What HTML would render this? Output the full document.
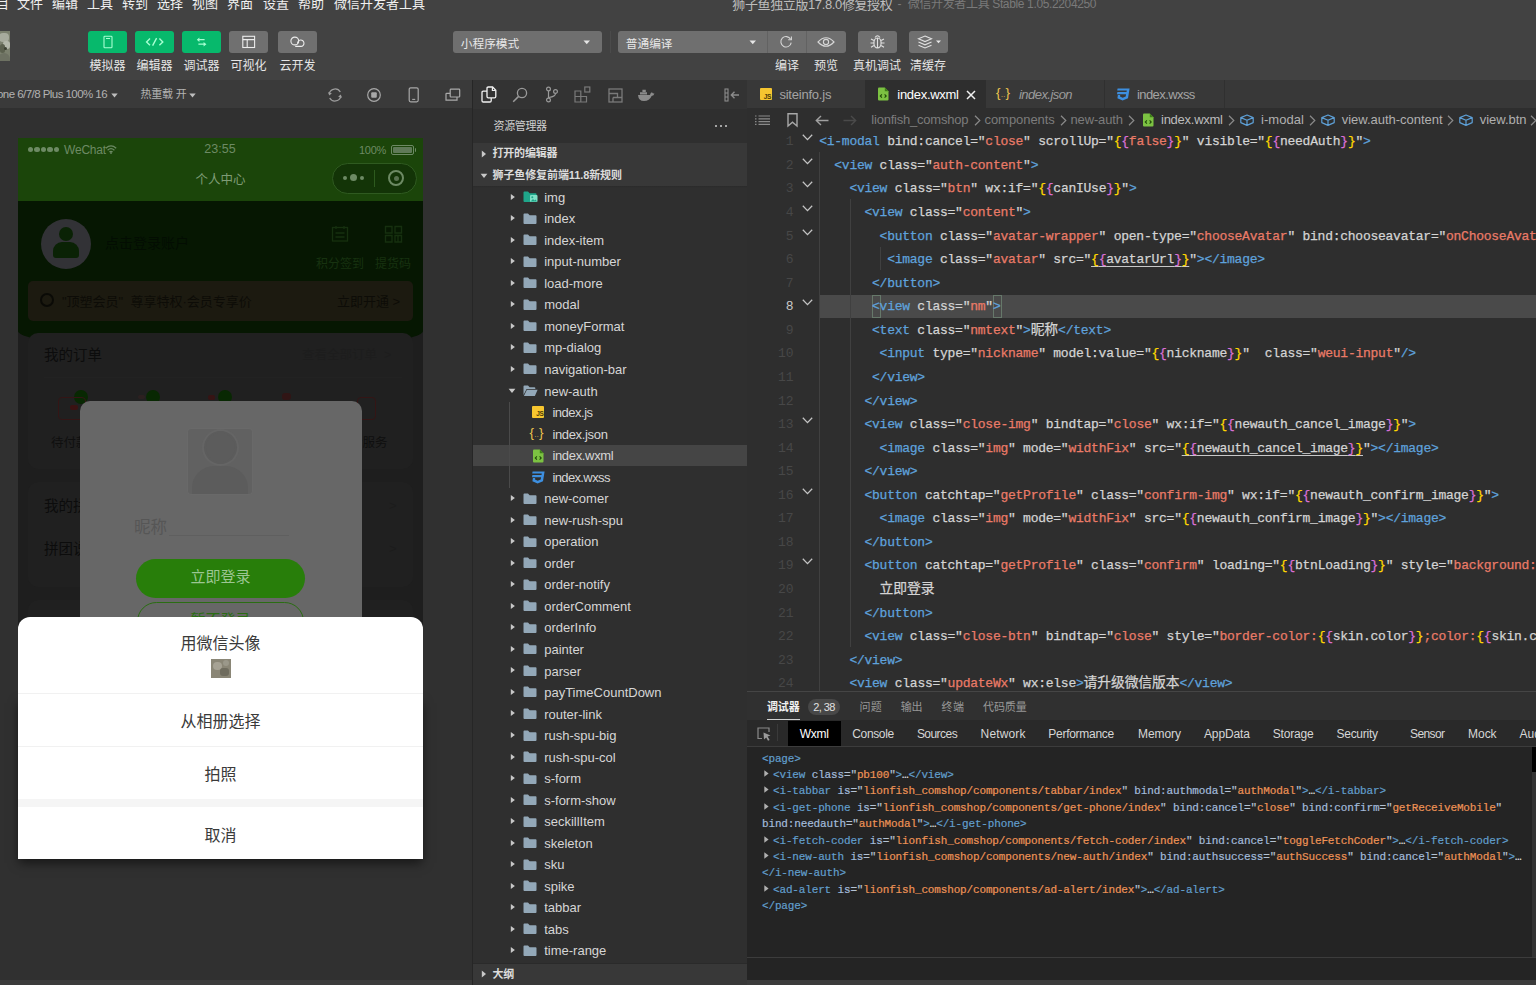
<!DOCTYPE html>
<html lang="zh-CN">
<head>
<meta charset="utf-8">
<title>微信开发者工具</title>
<style>
html,body{margin:0;padding:0;}
body{width:1536px;height:985px;overflow:hidden;background:#2e2e2e;
  font-family:"Liberation Sans","Noto Sans CJK SC",sans-serif;font-size:13px;color:#ddd;}
#app{position:relative;width:1536px;height:985px;overflow:hidden;background:#2e2e2e;}
.abs{position:absolute;}
.t{position:absolute;white-space:nowrap;line-height:1;}
svg{position:absolute;overflow:visible;}
/* top */
#menubar{position:absolute;left:0;top:0;width:1536px;height:15px;background:#424242;}
#toolbar{position:absolute;left:0;top:14px;width:1536px;height:66px;background:#424242;}
.menu{position:absolute;top:-3px;font-size:13px;line-height:14px;color:#f0f0f0;white-space:nowrap;}
.tbtn{position:absolute;top:31.2px;height:21.6px;width:39.2px;border-radius:3px;}
.g{background:#07b96c;}
.gr{background:#707070;}
.tlabel{position:absolute;top:60px;font-size:12px;line-height:13px;color:#e6e6e6;white-space:nowrap;text-align:center;}
.sel{position:absolute;top:31.2px;height:21.6px;background:#6f6f6f;border-radius:3px;}
.sel span{position:absolute;left:7.8px;top:5.8px;font-size:11.7px;line-height:14px;color:#e8e8e8;}
/* simulator */
#simbar{position:absolute;left:0;top:80px;width:472px;height:28px;background:#3a3a3a;}
#simarea{position:absolute;left:0;top:108px;width:472px;height:872px;background:#303030;}
#phone{position:absolute;left:18px;top:138px;width:405px;height:721px;overflow:hidden;background:#1e1e1e;}
/* sidebar */
#side{position:absolute;left:473px;top:80px;width:274px;height:905px;background:#2f2f2f;}
.row{position:absolute;left:0;width:274px;height:22px;}
.row .lbl{position:absolute;top:4px;font-size:13px;line-height:14px;color:#d0d0d0;white-space:nowrap;}
/* editor */
#editor{position:absolute;left:747px;top:80px;width:789px;height:611px;background:#2e2e2e;}
.code{position:absolute;white-space:pre;font-family:"Liberation Mono","Noto Sans CJK SC",monospace;font-size:13px;letter-spacing:-0.25px;line-height:16px;color:#d4d4d4;-webkit-text-stroke:0.25px;}
.tg{color:#5fa2dc;}
.st{color:#ea7b68;}
.y{color:#ffd700;}
.m{color:#da70d6;}
.ln{position:absolute;width:30px;text-align:right;font-family:"Liberation Mono",monospace;font-size:13px;letter-spacing:-0.25px;line-height:16px;color:#4a4a4a;}
/* debugger */
#debug{position:absolute;left:747px;top:691px;width:789px;height:294px;background:#242424;}
.wx{position:absolute;white-space:pre;font-family:"Liberation Mono",monospace;font-size:11px;letter-spacing:-0.15px;line-height:13px;color:#9cbfdb;-webkit-text-stroke:0.2px;}
.wt{color:#629fcd;}
.wa{color:#a3bcdc;}
.ws{color:#ee9356;}
.wd{color:#b4c2d2;}
.id{color:#d4d4d4;}
.cj{font-size:13.8px;letter-spacing:-0.1px;}
.ul{text-decoration:underline;text-decoration-color:#c8c8c8;text-underline-offset:3px;}
.dt{position:absolute;top:35.5px;font-size:12px;line-height:13px;color:#d6d6d6;white-space:nowrap;}
.pt{position:absolute;top:9.5px;font-size:11px;line-height:12px;color:#9a9a9a;white-space:nowrap;}
.we{color:#e8e8e8;}

</style>
</head>
<body>
<div id="app">
<div id="menubar">
<span class="menu" style="left:-17px">项目</span>
<span class="menu" style="left:17px">文件</span>
<span class="menu" style="left:52px">编辑</span>
<span class="menu" style="left:87px">工具</span>
<span class="menu" style="left:122px">转到</span>
<span class="menu" style="left:157px">选择</span>
<span class="menu" style="left:192px">视图</span>
<span class="menu" style="left:227px">界面</span>
<span class="menu" style="left:263px">设置</span>
<span class="menu" style="left:298px">帮助</span>
<span class="menu" style="left:334px">微信开发者工具</span>
<span class="t" style="left:732.3px;top:-2.5px;font-size:13px;color:#bdbdbd;letter-spacing:-0.38px;">狮子鱼独立版17.8.0修复授权</span>
<span class="t" style="left:897.5px;top:-2.0px;font-size:12px;color:#7a7a7a;">-</span>
<span class="t" style="left:907.8px;top:-1.8px;font-size:12px;color:#7a7a7a;letter-spacing:-0.36px;">微信开发者工具 Stable 1.05.2204250</span>
</div>
<div id="toolbar"></div>
<div class="abs" style="left:-22px;top:31px;width:32.2px;height:30px;background:#7b806e;overflow:hidden"><div class="abs" style="left:21px;top:2px;width:10px;height:9px;background:#a7ab9d;border-radius:4px"></div><div class="abs" style="left:25px;top:10px;width:7px;height:8px;background:#b4b8ab;border-radius:3px"></div><div class="abs" style="left:22px;top:13px;width:5px;height:9px;background:#5c614f;border-radius:3px"></div><div class="abs" style="left:26px;top:16px;width:3px;height:3px;background:#3c4032;border-radius:2px"></div><div class="abs" style="left:20px;top:22px;width:12px;height:8px;background:#6d7162;border-radius:6px 6px 0 0"></div></div>
<div class="tbtn g" style="left:88px"><svg width="39" height="22" viewBox="0 0 39 22"><rect x="16" y="5.2" width="8" height="11.6" rx="0.8" fill="none" stroke="#a6ffd2" stroke-width="1.1"/><line x1="18" y1="7.5" x2="22" y2="7.5" stroke="#a6ffd2" stroke-width="1"/></svg></div>
<div class="tlabel" style="left:84px;width:47px">模拟器</div>
<div class="tbtn g" style="left:135px"><svg width="39" height="22" viewBox="0 0 39 22"><path d="M15 7.6 L11.6 10.9 L15 14.2 M24.4 7.6 L27.8 10.9 L24.4 14.2 M21.6 7.2 L17.6 14.6" fill="none" stroke="#a6ffd2" stroke-width="1.4"/></svg></div>
<div class="tlabel" style="left:131px;width:47px">编辑器</div>
<div class="tbtn g" style="left:182px"><svg width="39" height="22" viewBox="0 0 39 22"><path d="M16 8.7 H22.6 M16.4 13.2 H23" fill="none" stroke="#a6ffd2" stroke-width="1.3"/><path d="M17.4 6.5 L14.8 8.7 L17.4 10.9 Z M21.6 11 L24.4 13.2 L21.6 15.4 Z" fill="#a6ffd2"/></svg></div>
<div class="tlabel" style="left:178px;width:47px">调试器</div>
<div class="tbtn gr" style="left:229px"><svg width="39" height="22" viewBox="0 0 39 22"><rect x="13.8" y="5.3" width="11.8" height="11.2" fill="none" stroke="#ececec" stroke-width="1.1"/><path d="M13.8 8.6 H25.6 M18.2 8.6 V16.5" fill="none" stroke="#ececec" stroke-width="1.1"/></svg></div>
<div class="tlabel" style="left:225px;width:47px">可视化</div>
<div class="tbtn gr" style="left:278px"><svg width="39" height="22" viewBox="0 0 39 22"><circle cx="16.8" cy="10" r="3.9" fill="none" stroke="#ececec" stroke-width="1.1"/><path d="M19.6 12.6 A3.2 3.2 0 1 1 23 15.4 H17.2" fill="none" stroke="#ececec" stroke-width="1.1"/></svg></div>
<div class="tlabel" style="left:274px;width:47px">云开发</div>
<div class="sel" style="left:453px;width:149px"><span>小程序模式</span><svg width="8" height="5" style="left:130px;top:9px" viewBox="0 0 8 5"><path d="M0.5 0.5 H7 L3.75 4.2 Z" fill="#e6e6e6"/></svg></div>
<div class="abs" style="left:610px;top:31px;width:1px;height:22px;background:#4b4b4b"></div>
<div class="sel" style="left:618px;width:228px"><span>普通编译</span><svg width="8" height="5" style="left:131px;top:9px" viewBox="0 0 8 5"><path d="M0.5 0.5 H7 L3.75 4.2 Z" fill="#e6e6e6"/></svg><div class="abs" style="left:149px;top:0;width:1px;height:22px;background:#626262"></div><div class="abs" style="left:188px;top:0;width:1px;height:22px;background:#626262"></div><svg width="16" height="16" style="left:160px;top:3px" viewBox="0 0 16 16"><path d="M12.6 5.2 A5.2 5.2 0 1 0 13.2 8.6" fill="none" stroke="#d6d6d6" stroke-width="1.1"/><path d="M13.4 2.6 V5.8 H10.2" fill="none" stroke="#d6d6d6" stroke-width="1.1"/></svg><svg width="18" height="12" style="left:199px;top:5px" viewBox="0 0 18 12"><path d="M1 6 Q9 -2.5 17 6 Q9 14.5 1 6 Z" fill="none" stroke="#d6d6d6" stroke-width="1.1"/><circle cx="9" cy="6" r="2.6" fill="none" stroke="#d6d6d6" stroke-width="1.1"/></svg></div>
<div class="tbtn gr" style="left:858px;background:#6f6f6f"><svg width="39" height="22" viewBox="0 0 39 22"><ellipse cx="19.5" cy="12" rx="3.6" ry="5" fill="none" stroke="#e0e0e0" stroke-width="1.2"/><path d="M19.5 7 V17 M17 6.5 Q19.5 3 22 6.5 M15.9 9.5 L13 8 M15.9 12 H12.5 M15.9 14.5 L13 16.3 M23.1 9.5 L26 8 M23.1 12 H26.5 M23.1 14.5 L26 16.3" fill="none" stroke="#e0e0e0" stroke-width="1.1"/></svg></div>
<div class="tbtn gr" style="left:909px;background:#6f6f6f"><svg width="39" height="22" viewBox="0 0 39 22"><path d="M16 5 L22.5 7.8 L16 10.6 L9.5 7.8 Z" fill="none" stroke="#e0e0e0" stroke-width="1.1"/><path d="M9.5 11 L16 13.8 L22.5 11 M9.5 14.2 L16 17 L22.5 14.2" fill="none" stroke="#e0e0e0" stroke-width="1.1"/><path d="M27 9.5 H32 L29.5 12.3 Z" fill="#e6e6e6"/></svg></div>
<div class="tlabel" style="left:763px;width:48px">编译</div>
<div class="tlabel" style="left:802px;width:48px">预览</div>
<div class="tlabel" style="left:847px;width:60px">真机调试</div>
<div class="tlabel" style="left:903px;width:50px">清缓存</div>
<div id="simbar">
<span class="t" style="left:-3.0px;top:8.8px;font-size:11.5px;color:#b2b2b2;letter-spacing:-0.55px;">one 6/7/8 Plus 100% 16</span>
<svg width="7" height="5" style="left:110.5px;top:13px" viewBox="0 0 7 5"><path d="M0.3 0.5 H6.7 L3.5 4.5 Z" fill="#bdbdbd"/></svg>
<span class="t" style="left:140.6px;top:8.8px;font-size:11px;color:#b2b2b2;letter-spacing:-0.25px;">热重载</span>
<span class="t" style="left:175.8px;top:8.8px;font-size:11px;color:#b2b2b2;">开</span>
<svg width="7" height="5" style="left:189px;top:13px" viewBox="0 0 7 5"><path d="M0.3 0.5 H6.7 L3.5 4.5 Z" fill="#bdbdbd"/></svg>
<svg width="16" height="16" style="left:327.4px;top:7px" viewBox="0 0 16 16"><path d="M2.3 6.4 A6 6 0 0 1 13.3 5 M13.7 9.6 A6 6 0 0 1 2.7 11" fill="none" stroke="#9c9c9c" stroke-width="1.3"/><path d="M0.9 5.2 L2.3 8.6 L4.9 6.2 Z M15.1 10.8 L13.7 7.4 L11.1 9.8 Z" fill="#9c9c9c"/></svg>
<svg width="16" height="16" style="left:366px;top:7px" viewBox="0 0 16 16"><circle cx="8" cy="8" r="6.3" fill="none" stroke="#a8a8a8" stroke-width="1.2"/><rect x="5.2" y="5.2" width="5.6" height="5.6" rx="1" fill="#a8a8a8"/></svg>
<svg width="12" height="16" style="left:408px;top:7px" viewBox="0 0 12 16"><rect x="1.2" y="0.8" width="9" height="14" rx="1.5" fill="none" stroke="#a8a8a8" stroke-width="1.2"/><line x1="4.2" y1="12.4" x2="7.2" y2="12.4" stroke="#a8a8a8" stroke-width="1.1"/></svg>
<svg width="16" height="14" style="left:445px;top:8px" viewBox="0 0 16 14"><rect x="5.2" y="1.2" width="9.5" height="7.8" rx="0.8" fill="none" stroke="#aaaaaa" stroke-width="1.2"/><path d="M5.2 5.3 H1.6 Q1 5.3 1 5.9 V12.2 H12 V9" fill="none" stroke="#aaaaaa" stroke-width="1.2"/></svg>
</div>
<div id="simarea"></div>
<div class="abs" style="left:0;top:980px;width:472px;height:5px;background:#3b3b3b"></div>
<div class="abs" style="left:472px;top:80px;width:1px;height:905px;background:#262626"></div>
<div class="abs" style="left:21px;top:700px;width:399px;height:156px;box-shadow:0 5px 10px 2px rgba(0,0,0,0.55)"></div>
<div id="phone">
<div class="abs" style="left:0;top:62px;width:405px;height:150px;background:#061702;border-radius:0 0 50% 50% / 0 0 19px 19px"></div>
<div class="abs" style="left:0;top:0;width:405px;height:63px;background:#1b450a"></div>
<div class="abs" style="left:9.6px;top:9px;width:5.4px;height:5.4px;border-radius:3px;background:#6d8a64"></div>
<div class="abs" style="left:16.2px;top:9px;width:5.4px;height:5.4px;border-radius:3px;background:#6d8a64"></div>
<div class="abs" style="left:22.8px;top:9px;width:5.4px;height:5.4px;border-radius:3px;background:#6d8a64"></div>
<div class="abs" style="left:29.4px;top:9px;width:5.4px;height:5.4px;border-radius:3px;background:#6d8a64"></div>
<div class="abs" style="left:36.0px;top:9px;width:5.4px;height:5.4px;border-radius:3px;background:#6d8a64"></div>
<span class="t" style="left:46px;top:6px;font-size:12px;color:#6d8a64;letter-spacing:-0.2px">WeChat</span>
<svg width="12" height="9" style="left:87px;top:7px" viewBox="0 0 12 9"><path d="M0.8 3.2 Q6 -1.4 11.2 3.2 M2.6 5.2 Q6 2.2 9.4 5.2 M4.4 7 Q6 5.6 7.6 7" fill="none" stroke="#6d8a64" stroke-width="1.2"/><circle cx="6" cy="8" r="0.9" fill="#6d8a64"/></svg>
<span class="t" style="left:172px;width:60px;text-align:center;top:5px;font-size:12.5px;color:#6d8a64">23:55</span>
<span class="t" style="left:341px;top:7px;font-size:11px;color:#6d8a64;letter-spacing:-0.3px">100%</span>
<div class="abs" style="left:373px;top:7px;width:21px;height:8px;border:1px solid #6d8a64;border-radius:2px;box-sizing:content-box"><div class="abs" style="left:1px;top:1px;width:19px;height:6px;background:#5f7a58;border-radius:1px"></div></div>
<div class="abs" style="left:396.5px;top:9.5px;width:1.5px;height:4px;background:#6d8a64;border-radius:0 1px 1px 0"></div>
<span class="t" style="left:152.5px;width:100px;text-align:center;top:36px;font-size:12.5px;color:#7f9c76">个人中心</span>
<div class="abs" style="left:314px;top:25px;width:83px;height:29px;border:1px solid #2f5a20;border-radius:16px;background:#133407;box-sizing:content-box"></div>
<div class="abs" style="left:356px;top:32px;width:1px;height:17px;background:#2d5a1e"></div>
<div class="abs" style="left:324.5px;top:37.5px;width:4px;height:4px;border-radius:3px;background:#6d8a64"></div>
<div class="abs" style="left:331.5px;top:36px;width:7px;height:7px;border-radius:4px;background:#6d8a64"></div>
<div class="abs" style="left:341.5px;top:37.5px;width:4px;height:4px;border-radius:3px;background:#6d8a64"></div>
<div class="abs" style="left:370px;top:32px;width:12px;height:12px;border:2px solid #6d8a64;border-radius:9px;box-sizing:content-box"></div>
<div class="abs" style="left:375.5px;top:37.5px;width:5px;height:5px;border-radius:3px;background:#587250"></div>
<div class="abs" style="left:23px;top:80.5px;width:50px;height:50px;border-radius:25px;background:#323236"></div>
<div class="abs" style="left:41px;top:89px;width:14px;height:14px;border-radius:7px;background:#0a2205"></div>
<div class="abs" style="left:35px;top:104px;width:26px;height:16px;border-radius:9px 9px 3px 3px;background:#0a2205"></div>
<span class="t" style="left:87px;top:98px;font-size:14px;color:#030d02">点击登录账户</span>
<svg width="20" height="18" style="left:312px;top:87px" viewBox="0 0 20 18"><rect x="2.5" y="2.5" width="15" height="13.5" fill="none" stroke="#16300f" stroke-width="1.3"/><path d="M6 1 V4 M14 1 V4 M5.5 8 H14.5 M5.5 12 H14.5" stroke="#16300f" stroke-width="1.3"/></svg>
<svg width="20" height="18" style="left:366px;top:87px" viewBox="0 0 20 18"><path d="M1.5 1.5 H8 V8 H1.5 Z M11 1.5 H17.5 V8 H11 Z M1.5 10.5 H8 V17 H1.5 Z M11 10.5 H17.5 V17 H11 Z M14 10.5 V17" fill="none" stroke="#16300f" stroke-width="1.4"/></svg>
<span class="t" style="left:298px;top:120px;font-size:12px;color:#173210">积分签到</span>
<span class="t" style="left:357px;top:120px;font-size:12px;color:#173210">提货码</span>
<div class="abs" style="left:10px;top:143px;width:385px;height:40px;border-radius:5px;background:#1c1a10"></div>
<div class="abs" style="left:22px;top:155px;width:10px;height:10px;border:2.5px solid #0a0a06;border-radius:8px;box-sizing:content-box"></div>
<span class="t" style="left:44px;top:157px;font-size:13px;color:#0d0c07">"顶塑会员"&nbsp;&nbsp;尊享特权·会员专享价</span>
<span class="t" style="left:319px;top:157px;font-size:13px;color:#0d0c07">立即开通 &gt;</span>
<div class="abs" style="left:10px;top:195px;width:385px;height:136px;border-radius:10px;background:#202020"></div>
<span class="t" style="left:26px;top:210px;font-size:14.5px;color:#0c0c0c">我的订单</span>
<span class="t" style="left:284px;top:211px;font-size:12.5px;color:#1d1d1d">查看全部订单&nbsp; &gt;</span>
<div class="abs" style="left:26px;top:239px;width:358px;height:1px;background:#222"></div>
<div class="abs" style="left:56px;top:251.6px;width:14.2px;height:14.2px;border-radius:7.1px;background:#082802"></div>
<div class="abs" style="left:128px;top:251.6px;width:14.2px;height:14.2px;border-radius:7.1px;background:#082802"></div>
<div class="abs" style="left:200px;top:251.6px;width:14.2px;height:14.2px;border-radius:7.1px;background:#082802"></div>
<div class="abs" style="left:40px;top:259px;width:26px;height:21px;border:1.5px solid #341515;border-radius:4px;box-sizing:content-box"></div>
<div class="abs" style="left:339px;top:259px;width:17px;height:21px;border:1.5px solid #341515;border-radius:4px;box-sizing:content-box"></div>
<div class="abs" style="left:52px;top:267px;width:8px;height:5px;background:#3a1212;border-radius:2px"></div>
<div class="abs" style="left:190px;top:257px;width:7px;height:5px;background:#361414;border-radius:2px"></div>
<div class="abs" style="left:264px;top:255px;width:9px;height:7px;background:#301515;border-radius:3px"></div>
<div class="abs" style="left:120px;top:257px;width:7px;height:4px;background:#2c2020;border-radius:2px"></div>
<span class="t" style="left:33px;top:299px;font-size:12.5px;color:#0f0f0f">待付款</span>
<span class="t" style="left:332px;top:299px;font-size:12.5px;color:#0f0f0f">后服务</span>
<div class="abs" style="left:10px;top:344px;width:385px;height:105px;border-radius:10px;background:#202020"></div>
<span class="t" style="left:26px;top:361px;font-size:14.5px;color:#0c0c0c">我的拼团</span>
<span class="t" style="left:26px;top:404px;font-size:14.5px;color:#0c0c0c">拼团说明</span>
<span class="t" style="left:371px;top:361px;font-size:13px;color:#1c1c1c">&gt;</span>
<span class="t" style="left:371px;top:404px;font-size:13px;color:#1c1c1c">&gt;</span>
<div class="abs" style="left:10px;top:462px;width:385px;height:120px;border-radius:10px;background:#202020"></div>
<div class="abs" style="left:62px;top:263px;width:282px;height:240px;border-radius:10px;background:#676767"></div>
<div class="abs" style="left:170px;top:291px;width:64px;height:65px;border-radius:3px;background:#616161;overflow:hidden;box-shadow:0 0 0 0.5px #6c6c6c"><div class="abs" style="left:16px;top:2px;width:33px;height:33px;border-radius:17px;background:#5c5c5c;box-shadow:0 0 0 2px #656565"></div><div class="abs" style="left:4px;top:37px;width:56px;height:40px;border-radius:22px 22px 0 0;background:#5c5c5c"></div><div class="abs" style="left:18px;top:4px;width:29px;height:29px;border-radius:15px;background:#5c5c5c"></div></div>
<span class="t" style="left:116px;top:381px;font-size:16.5px;color:#565656">昵称</span>
<div class="abs" style="left:151px;top:397px;width:120px;height:1px;background:#5f5f5f"></div>
<div class="abs" style="left:118px;top:420.7px;width:169px;height:39px;border-radius:20px;background:#287e0a"></div>
<span class="t" style="left:118px;width:169px;text-align:center;top:430.7px;font-size:15px;color:#9cc692">立即登录</span>
<div class="abs" style="left:119px;top:464px;width:165px;height:37px;border:1px solid #2a6d12;border-radius:20px;box-sizing:content-box"></div>
<span class="t" style="left:118px;width:169px;text-align:center;top:474px;font-size:15px;color:#2a6d12">暂不登录</span>
<div class="abs" style="left:0;top:478.5px;width:405px;height:242.7px;border-radius:12px 12px 0 0;background:#fff;overflow:hidden"><div class="abs" style="left:0;top:76.5px;width:405px;height:1px;background:#f1f1f1"></div><div class="abs" style="left:0;top:129.5px;width:405px;height:1px;background:#f1f1f1"></div><div class="abs" style="left:0;top:182.5px;width:405px;height:7.5px;background:#f5f5f5"></div><span class="t" style="left:0;width:405px;text-align:center;top:19.5px;font-size:16px;color:#3a3a3a">用微信头像</span><div class="abs" style="left:193px;top:42px;width:20px;height:19px;background:#8a8676;overflow:hidden"><div class="abs" style="left:2px;top:3px;width:9px;height:8px;background:#a6a294;border-radius:4px"></div><div class="abs" style="left:9px;top:9px;width:9px;height:8px;background:#6f6c5e;border-radius:3px"></div><div class="abs" style="left:12px;top:1px;width:6px;height:6px;background:#9b988a;border-radius:3px"></div></div><span class="t" style="left:0;width:405px;text-align:center;top:97.5px;font-size:16px;color:#3a3a3a">从相册选择</span><span class="t" style="left:0;width:405px;text-align:center;top:150.3px;font-size:16px;color:#3a3a3a">拍照</span><span class="t" style="left:0;width:405px;text-align:center;top:211px;font-size:16px;color:#3a3a3a">取消</span></div>
</div>
<div id="side">
<div class="abs" style="left:0;top:0;width:274px;height:28.5px;background:#333333"></div>
<svg width="16" height="18" style="left:8px;top:5.5px" viewBox="0 0 16 18"><path d="M6 5.1 H2.3 Q1 5.1 1 6.4 V14.7 Q1 16 2.3 16 H8.9 Q10.2 16 10.2 14.7 V12" fill="none" stroke="#f2f2f2" stroke-width="1.3"/><path d="M7.3 1 H11.6 L14.8 4.2 V10.6 Q14.8 11.9 13.5 11.9 H7.3 Q6 11.9 6 10.6 V2.3 Q6 1 7.3 1 Z" fill="none" stroke="#f2f2f2" stroke-width="1.3"/><path d="M11.4 1.2 V4.5 H14.6" fill="none" stroke="#f2f2f2" stroke-width="1.2"/></svg>
<svg width="16" height="16" style="left:39px;top:7px" viewBox="0 0 16 16"><circle cx="10" cy="6" r="4.6" fill="none" stroke="#9a9a9a" stroke-width="1.3"/><path d="M6.6 9.4 L1.2 14.8" stroke="#9a9a9a" stroke-width="1.5"/></svg>
<svg width="14" height="17" style="left:72px;top:6px" viewBox="0 0 14 17"><circle cx="3.5" cy="3" r="1.9" fill="none" stroke="#9a9a9a" stroke-width="1.2"/><circle cx="3.5" cy="14" r="1.9" fill="none" stroke="#9a9a9a" stroke-width="1.2"/><circle cx="10.5" cy="5.5" r="1.9" fill="none" stroke="#9a9a9a" stroke-width="1.2"/><path d="M3.5 5 V12 M10.5 7.5 Q10.5 10.5 3.8 11.5" fill="none" stroke="#9a9a9a" stroke-width="1.2"/></svg>
<svg width="17" height="17" style="left:101px;top:6px" viewBox="0 0 17 17"><path d="M1 5 H6.8 V10.5 H12.5 V16 H1 Z M1 10.5 H6.8 V16" fill="none" stroke="#7a7a7a" stroke-width="1.2"/><rect x="10.8" y="1" width="5" height="5" fill="#333333" stroke="#7a7a7a" stroke-width="1.2"/></svg>
<svg width="15" height="15" style="left:135px;top:8px" viewBox="0 0 15 15"><rect x="1" y="1" width="13" height="13" fill="none" stroke="#7a7a7a" stroke-width="1.3"/><path d="M1 5.5 H9.5 V9.5 H14 M5 9.5 H9.5 M5 9.5 V14" fill="none" stroke="#7a7a7a" stroke-width="1.3"/></svg>
<svg width="18" height="14" style="left:164px;top:8px" viewBox="0 0 18 14"><path d="M1 7 H13 Q13.5 4.5 15 4.2 Q15.5 5.6 17.4 5.4 Q17 7.6 14.6 8 Q12.5 13 7 13 Q1.5 13 1 7 Z" fill="#8c8c8c"/><path d="M3 4.2 H10 V6.6 H3 Z M5.4 1.8 H8.8 V4 H5.4 Z" fill="#8c8c8c"/></svg>
<svg width="18" height="14" style="left:250px;top:8px" viewBox="0 0 18 14"><rect x="2" y="1" width="3" height="12" fill="none" stroke="#8c8c8c" stroke-width="1.1"/><path d="M2 5 H5 M2 9 H5" stroke="#8c8c8c" stroke-width="1"/><path d="M16 7 H8.5 M11.5 3.8 L8.3 7 L11.5 10.2" fill="none" stroke="#8c8c8c" stroke-width="1.4"/></svg>
<span class="t" style="left:20.6px;top:41.0px;font-size:11px;color:#cfcfcf;letter-spacing:-0.40px;">资源管理器</span>
<div class="abs" style="left:242px;top:45px;width:2.4px;height:2.4px;border-radius:2px;background:#ccc"></div>
<div class="abs" style="left:247px;top:45px;width:2.4px;height:2.4px;border-radius:2px;background:#ccc"></div>
<div class="abs" style="left:252px;top:45px;width:2.4px;height:2.4px;border-radius:2px;background:#ccc"></div>
<div class="abs" style="left:0;top:63.2px;width:274px;height:42.5px;background:#383838"></div>
<div class="abs" style="left:0;top:105.7px;width:274px;height:2px;background:linear-gradient(#2a2a2a,#2f2f2f)"></div>
<svg width="6" height="8" style="left:8px;top:70px" viewBox="0 0 6 8"><path d="M0.8 0.6 L5 4 L0.8 7.4 Z" fill="#c8c8c8"/></svg>
<span class="t" style="left:19.5px;top:68.4px;font-size:11px;color:#dcdcdc;letter-spacing:-0.20px;font-weight:bold;">打开的编辑器</span>
<svg width="8" height="6" style="left:6.5px;top:92.5px" viewBox="0 0 8 6"><path d="M0.6 0.8 H7.4 L4 5 Z" fill="#c8c8c8"/></svg>
<span class="t" style="left:19.5px;top:89.6px;font-size:11px;color:#dcdcdc;letter-spacing:-0.10px;font-weight:bold;">狮子鱼修复前端11.8新规则</span>
<svg width="6" height="8" style="left:37px;top:112.6px" viewBox="0 0 6 8"><path d="M0.8 0.9 L4.9 4 L0.8 7.1 Z" fill="#c8c8c8"/></svg>
<svg width="15" height="12" style="left:50px;top:111.1px" viewBox="0 0 15 12"><path d="M0.5 1.5 Q0.5 0.6 1.4 0.6 H5 L6.6 2.2 H12.6 Q13.5 2.2 13.5 3.1 V10 Q13.5 10.9 12.6 10.9 H1.4 Q0.5 10.9 0.5 10 Z" fill="#1fa68a"/><rect x="7" y="4" width="7.5" height="7" rx="1" fill="#7fe0c6"/><circle cx="9.3" cy="6.3" r="1" fill="#1fa68a"/><path d="M7.6 10.4 L10 8 L11.4 9.4 L12.6 8.4 L14 10.4 Z" fill="#1fa68a"/></svg>
<span class="t" style="left:71.2px;top:110.7px;font-size:13px;color:#d6d6d6;">img</span>
<svg width="6" height="8" style="left:37px;top:134.1px" viewBox="0 0 6 8"><path d="M0.8 0.9 L4.9 4 L0.8 7.1 Z" fill="#c8c8c8"/></svg>
<svg width="15" height="12" style="left:50px;top:132.6px" viewBox="0 0 15 12"><path d="M0.5 1.5 Q0.5 0.6 1.4 0.6 H5 L6.6 2.2 H12.6 Q13.5 2.2 13.5 3.1 V10 Q13.5 10.9 12.6 10.9 H1.4 Q0.5 10.9 0.5 10 Z" fill="#93a8b8"/></svg>
<span class="t" style="left:71.2px;top:132.2px;font-size:13px;color:#d6d6d6;">index</span>
<svg width="6" height="8" style="left:37px;top:155.7px" viewBox="0 0 6 8"><path d="M0.8 0.9 L4.9 4 L0.8 7.1 Z" fill="#c8c8c8"/></svg>
<svg width="15" height="12" style="left:50px;top:154.2px" viewBox="0 0 15 12"><path d="M0.5 1.5 Q0.5 0.6 1.4 0.6 H5 L6.6 2.2 H12.6 Q13.5 2.2 13.5 3.1 V10 Q13.5 10.9 12.6 10.9 H1.4 Q0.5 10.9 0.5 10 Z" fill="#93a8b8"/></svg>
<span class="t" style="left:71.2px;top:153.8px;font-size:13px;color:#d6d6d6;">index-item</span>
<svg width="6" height="8" style="left:37px;top:177.2px" viewBox="0 0 6 8"><path d="M0.8 0.9 L4.9 4 L0.8 7.1 Z" fill="#c8c8c8"/></svg>
<svg width="15" height="12" style="left:50px;top:175.7px" viewBox="0 0 15 12"><path d="M0.5 1.5 Q0.5 0.6 1.4 0.6 H5 L6.6 2.2 H12.6 Q13.5 2.2 13.5 3.1 V10 Q13.5 10.9 12.6 10.9 H1.4 Q0.5 10.9 0.5 10 Z" fill="#93a8b8"/></svg>
<span class="t" style="left:71.2px;top:175.3px;font-size:13px;color:#d6d6d6;">input-number</span>
<svg width="6" height="8" style="left:37px;top:198.7px" viewBox="0 0 6 8"><path d="M0.8 0.9 L4.9 4 L0.8 7.1 Z" fill="#c8c8c8"/></svg>
<svg width="15" height="12" style="left:50px;top:197.2px" viewBox="0 0 15 12"><path d="M0.5 1.5 Q0.5 0.6 1.4 0.6 H5 L6.6 2.2 H12.6 Q13.5 2.2 13.5 3.1 V10 Q13.5 10.9 12.6 10.9 H1.4 Q0.5 10.9 0.5 10 Z" fill="#93a8b8"/></svg>
<span class="t" style="left:71.2px;top:196.8px;font-size:13px;color:#d6d6d6;">load-more</span>
<svg width="6" height="8" style="left:37px;top:220.3px" viewBox="0 0 6 8"><path d="M0.8 0.9 L4.9 4 L0.8 7.1 Z" fill="#c8c8c8"/></svg>
<svg width="15" height="12" style="left:50px;top:218.8px" viewBox="0 0 15 12"><path d="M0.5 1.5 Q0.5 0.6 1.4 0.6 H5 L6.6 2.2 H12.6 Q13.5 2.2 13.5 3.1 V10 Q13.5 10.9 12.6 10.9 H1.4 Q0.5 10.9 0.5 10 Z" fill="#93a8b8"/></svg>
<span class="t" style="left:71.2px;top:218.4px;font-size:13px;color:#d6d6d6;">modal</span>
<svg width="6" height="8" style="left:37px;top:241.8px" viewBox="0 0 6 8"><path d="M0.8 0.9 L4.9 4 L0.8 7.1 Z" fill="#c8c8c8"/></svg>
<svg width="15" height="12" style="left:50px;top:240.3px" viewBox="0 0 15 12"><path d="M0.5 1.5 Q0.5 0.6 1.4 0.6 H5 L6.6 2.2 H12.6 Q13.5 2.2 13.5 3.1 V10 Q13.5 10.9 12.6 10.9 H1.4 Q0.5 10.9 0.5 10 Z" fill="#93a8b8"/></svg>
<span class="t" style="left:71.2px;top:239.9px;font-size:13px;color:#d6d6d6;">moneyFormat</span>
<svg width="6" height="8" style="left:37px;top:263.3px" viewBox="0 0 6 8"><path d="M0.8 0.9 L4.9 4 L0.8 7.1 Z" fill="#c8c8c8"/></svg>
<svg width="15" height="12" style="left:50px;top:261.8px" viewBox="0 0 15 12"><path d="M0.5 1.5 Q0.5 0.6 1.4 0.6 H5 L6.6 2.2 H12.6 Q13.5 2.2 13.5 3.1 V10 Q13.5 10.9 12.6 10.9 H1.4 Q0.5 10.9 0.5 10 Z" fill="#93a8b8"/></svg>
<span class="t" style="left:71.2px;top:261.4px;font-size:13px;color:#d6d6d6;">mp-dialog</span>
<svg width="6" height="8" style="left:37px;top:284.9px" viewBox="0 0 6 8"><path d="M0.8 0.9 L4.9 4 L0.8 7.1 Z" fill="#c8c8c8"/></svg>
<svg width="15" height="12" style="left:50px;top:283.4px" viewBox="0 0 15 12"><path d="M0.5 1.5 Q0.5 0.6 1.4 0.6 H5 L6.6 2.2 H12.6 Q13.5 2.2 13.5 3.1 V10 Q13.5 10.9 12.6 10.9 H1.4 Q0.5 10.9 0.5 10 Z" fill="#93a8b8"/></svg>
<span class="t" style="left:71.2px;top:283.0px;font-size:13px;color:#d6d6d6;">navigation-bar</span>
<svg width="8" height="6" style="left:35px;top:308.4px" viewBox="0 0 8 6"><path d="M0.6 0.8 H7.4 L4 5 Z" fill="#c8c8c8"/></svg>
<svg width="15" height="12" style="left:50px;top:304.9px" viewBox="0 0 15 12"><path d="M0.5 1.5 Q0.5 0.6 1.4 0.6 H5 L6.6 2.2 H11.4 Q12.3 2.2 12.3 3.1 V4 H3.6 L0.5 10 Z" fill="#93a8b8"/><path d="M3.9 4.8 H14.6 L11.9 10.9 H0.9 Z" fill="#93a8b8"/></svg>
<span class="t" style="left:71.2px;top:304.5px;font-size:13px;color:#d6d6d6;">new-auth</span>
<div class="abs" style="left:59px;top:325.9px;width:12.3px;height:12.3px;background:#f7c62f;border-radius:1px"></div>
<span class="t" style="left:63.2px;top:331.2px;font-size:6.5px;font-weight:bold;color:#4a3a08;letter-spacing:-0.3px">JS</span>
<span class="t" style="left:79.4px;top:326.1px;font-size:13px;color:#d6d6d6;letter-spacing:-0.48px;">index.js</span>
<span class="t" style="left:56.5px;top:346.0px;font-size:13.5px;color:#ecc44e;letter-spacing:0.6px">{<span style="font-size:7px;position:relative;top:-0.5px;letter-spacing:0.3px">..</span>}</span>
<span class="t" style="left:79.4px;top:347.6px;font-size:13px;color:#d6d6d6;letter-spacing:-0.34px;">index.json</span>
<div class="abs" style="left:0;top:364.8px;width:274px;height:21.5px;background:#454545"></div>
<svg width="11" height="14" style="left:60px;top:368.5px" viewBox="0 0 11 14"><path d="M1 0.5 H6.8 L10.5 4.2 V12.5 Q10.5 13.5 9.5 13.5 H1 Q0 13.5 0 12.5 V1.5 Q0 0.5 1 0.5 Z" fill="#7cc242"/><path d="M6.8 0.5 V4.2 H10.5" fill="#3e7f18"/><path d="M3.9 7.4 L2.3 9 L3.9 10.6 M6.6 7.4 L8.2 9 L6.6 10.6" fill="none" stroke="#1f4a08" stroke-width="1.1"/></svg>
<span class="t" style="left:79.4px;top:369.1px;font-size:13px;color:#d6d6d6;letter-spacing:-0.33px;">index.wxml</span>
<svg width="14" height="13" style="left:58px;top:390.6px" viewBox="0 0 14 13"><path d="M1.6 0.5 H13.6 L12 10.2 L6.6 12.6 L1.4 10.2 L1.9 7 H4.2 L4 8.6 L6.7 9.8 L9.7 8.6 L10.1 6.3 H1 L1.4 3.9 H10.5 L10.8 2.6 H1.2 Z" fill="#3d8fe0"/></svg>
<span class="t" style="left:79.4px;top:390.7px;font-size:13px;color:#d6d6d6;letter-spacing:-0.62px;">index.wxss</span>
<svg width="6" height="8" style="left:37px;top:414.1px" viewBox="0 0 6 8"><path d="M0.8 0.9 L4.9 4 L0.8 7.1 Z" fill="#c8c8c8"/></svg>
<svg width="15" height="12" style="left:50px;top:412.6px" viewBox="0 0 15 12"><path d="M0.5 1.5 Q0.5 0.6 1.4 0.6 H5 L6.6 2.2 H12.6 Q13.5 2.2 13.5 3.1 V10 Q13.5 10.9 12.6 10.9 H1.4 Q0.5 10.9 0.5 10 Z" fill="#93a8b8"/></svg>
<span class="t" style="left:71.2px;top:412.2px;font-size:13px;color:#d6d6d6;">new-comer</span>
<svg width="6" height="8" style="left:37px;top:435.6px" viewBox="0 0 6 8"><path d="M0.8 0.9 L4.9 4 L0.8 7.1 Z" fill="#c8c8c8"/></svg>
<svg width="15" height="12" style="left:50px;top:434.1px" viewBox="0 0 15 12"><path d="M0.5 1.5 Q0.5 0.6 1.4 0.6 H5 L6.6 2.2 H12.6 Q13.5 2.2 13.5 3.1 V10 Q13.5 10.9 12.6 10.9 H1.4 Q0.5 10.9 0.5 10 Z" fill="#93a8b8"/></svg>
<span class="t" style="left:71.2px;top:433.7px;font-size:13px;color:#d6d6d6;">new-rush-spu</span>
<svg width="6" height="8" style="left:37px;top:457.2px" viewBox="0 0 6 8"><path d="M0.8 0.9 L4.9 4 L0.8 7.1 Z" fill="#c8c8c8"/></svg>
<svg width="15" height="12" style="left:50px;top:455.7px" viewBox="0 0 15 12"><path d="M0.5 1.5 Q0.5 0.6 1.4 0.6 H5 L6.6 2.2 H12.6 Q13.5 2.2 13.5 3.1 V10 Q13.5 10.9 12.6 10.9 H1.4 Q0.5 10.9 0.5 10 Z" fill="#93a8b8"/></svg>
<span class="t" style="left:71.2px;top:455.3px;font-size:13px;color:#d6d6d6;">operation</span>
<svg width="6" height="8" style="left:37px;top:478.7px" viewBox="0 0 6 8"><path d="M0.8 0.9 L4.9 4 L0.8 7.1 Z" fill="#c8c8c8"/></svg>
<svg width="15" height="12" style="left:50px;top:477.2px" viewBox="0 0 15 12"><path d="M0.5 1.5 Q0.5 0.6 1.4 0.6 H5 L6.6 2.2 H12.6 Q13.5 2.2 13.5 3.1 V10 Q13.5 10.9 12.6 10.9 H1.4 Q0.5 10.9 0.5 10 Z" fill="#93a8b8"/></svg>
<span class="t" style="left:71.2px;top:476.8px;font-size:13px;color:#d6d6d6;">order</span>
<svg width="6" height="8" style="left:37px;top:500.2px" viewBox="0 0 6 8"><path d="M0.8 0.9 L4.9 4 L0.8 7.1 Z" fill="#c8c8c8"/></svg>
<svg width="15" height="12" style="left:50px;top:498.7px" viewBox="0 0 15 12"><path d="M0.5 1.5 Q0.5 0.6 1.4 0.6 H5 L6.6 2.2 H12.6 Q13.5 2.2 13.5 3.1 V10 Q13.5 10.9 12.6 10.9 H1.4 Q0.5 10.9 0.5 10 Z" fill="#93a8b8"/></svg>
<span class="t" style="left:71.2px;top:498.3px;font-size:13px;color:#d6d6d6;">order-notify</span>
<svg width="6" height="8" style="left:37px;top:521.8px" viewBox="0 0 6 8"><path d="M0.8 0.9 L4.9 4 L0.8 7.1 Z" fill="#c8c8c8"/></svg>
<svg width="15" height="12" style="left:50px;top:520.3px" viewBox="0 0 15 12"><path d="M0.5 1.5 Q0.5 0.6 1.4 0.6 H5 L6.6 2.2 H12.6 Q13.5 2.2 13.5 3.1 V10 Q13.5 10.9 12.6 10.9 H1.4 Q0.5 10.9 0.5 10 Z" fill="#93a8b8"/></svg>
<span class="t" style="left:71.2px;top:519.9px;font-size:13px;color:#d6d6d6;">orderComment</span>
<svg width="6" height="8" style="left:37px;top:543.3px" viewBox="0 0 6 8"><path d="M0.8 0.9 L4.9 4 L0.8 7.1 Z" fill="#c8c8c8"/></svg>
<svg width="15" height="12" style="left:50px;top:541.8px" viewBox="0 0 15 12"><path d="M0.5 1.5 Q0.5 0.6 1.4 0.6 H5 L6.6 2.2 H12.6 Q13.5 2.2 13.5 3.1 V10 Q13.5 10.9 12.6 10.9 H1.4 Q0.5 10.9 0.5 10 Z" fill="#93a8b8"/></svg>
<span class="t" style="left:71.2px;top:541.4px;font-size:13px;color:#d6d6d6;">orderInfo</span>
<svg width="6" height="8" style="left:37px;top:564.8px" viewBox="0 0 6 8"><path d="M0.8 0.9 L4.9 4 L0.8 7.1 Z" fill="#c8c8c8"/></svg>
<svg width="15" height="12" style="left:50px;top:563.3px" viewBox="0 0 15 12"><path d="M0.5 1.5 Q0.5 0.6 1.4 0.6 H5 L6.6 2.2 H12.6 Q13.5 2.2 13.5 3.1 V10 Q13.5 10.9 12.6 10.9 H1.4 Q0.5 10.9 0.5 10 Z" fill="#93a8b8"/></svg>
<span class="t" style="left:71.2px;top:562.9px;font-size:13px;color:#d6d6d6;">painter</span>
<svg width="6" height="8" style="left:37px;top:586.4px" viewBox="0 0 6 8"><path d="M0.8 0.9 L4.9 4 L0.8 7.1 Z" fill="#c8c8c8"/></svg>
<svg width="15" height="12" style="left:50px;top:584.9px" viewBox="0 0 15 12"><path d="M0.5 1.5 Q0.5 0.6 1.4 0.6 H5 L6.6 2.2 H12.6 Q13.5 2.2 13.5 3.1 V10 Q13.5 10.9 12.6 10.9 H1.4 Q0.5 10.9 0.5 10 Z" fill="#93a8b8"/></svg>
<span class="t" style="left:71.2px;top:584.5px;font-size:13px;color:#d6d6d6;">parser</span>
<svg width="6" height="8" style="left:37px;top:607.9px" viewBox="0 0 6 8"><path d="M0.8 0.9 L4.9 4 L0.8 7.1 Z" fill="#c8c8c8"/></svg>
<svg width="15" height="12" style="left:50px;top:606.4px" viewBox="0 0 15 12"><path d="M0.5 1.5 Q0.5 0.6 1.4 0.6 H5 L6.6 2.2 H12.6 Q13.5 2.2 13.5 3.1 V10 Q13.5 10.9 12.6 10.9 H1.4 Q0.5 10.9 0.5 10 Z" fill="#93a8b8"/></svg>
<span class="t" style="left:71.2px;top:606.0px;font-size:13px;color:#d6d6d6;">payTimeCountDown</span>
<svg width="6" height="8" style="left:37px;top:629.4px" viewBox="0 0 6 8"><path d="M0.8 0.9 L4.9 4 L0.8 7.1 Z" fill="#c8c8c8"/></svg>
<svg width="15" height="12" style="left:50px;top:627.9px" viewBox="0 0 15 12"><path d="M0.5 1.5 Q0.5 0.6 1.4 0.6 H5 L6.6 2.2 H12.6 Q13.5 2.2 13.5 3.1 V10 Q13.5 10.9 12.6 10.9 H1.4 Q0.5 10.9 0.5 10 Z" fill="#93a8b8"/></svg>
<span class="t" style="left:71.2px;top:627.5px;font-size:13px;color:#d6d6d6;">router-link</span>
<svg width="6" height="8" style="left:37px;top:651.0px" viewBox="0 0 6 8"><path d="M0.8 0.9 L4.9 4 L0.8 7.1 Z" fill="#c8c8c8"/></svg>
<svg width="15" height="12" style="left:50px;top:649.5px" viewBox="0 0 15 12"><path d="M0.5 1.5 Q0.5 0.6 1.4 0.6 H5 L6.6 2.2 H12.6 Q13.5 2.2 13.5 3.1 V10 Q13.5 10.9 12.6 10.9 H1.4 Q0.5 10.9 0.5 10 Z" fill="#93a8b8"/></svg>
<span class="t" style="left:71.2px;top:649.1px;font-size:13px;color:#d6d6d6;">rush-spu-big</span>
<svg width="6" height="8" style="left:37px;top:672.5px" viewBox="0 0 6 8"><path d="M0.8 0.9 L4.9 4 L0.8 7.1 Z" fill="#c8c8c8"/></svg>
<svg width="15" height="12" style="left:50px;top:671.0px" viewBox="0 0 15 12"><path d="M0.5 1.5 Q0.5 0.6 1.4 0.6 H5 L6.6 2.2 H12.6 Q13.5 2.2 13.5 3.1 V10 Q13.5 10.9 12.6 10.9 H1.4 Q0.5 10.9 0.5 10 Z" fill="#93a8b8"/></svg>
<span class="t" style="left:71.2px;top:670.6px;font-size:13px;color:#d6d6d6;">rush-spu-col</span>
<svg width="6" height="8" style="left:37px;top:694.0px" viewBox="0 0 6 8"><path d="M0.8 0.9 L4.9 4 L0.8 7.1 Z" fill="#c8c8c8"/></svg>
<svg width="15" height="12" style="left:50px;top:692.5px" viewBox="0 0 15 12"><path d="M0.5 1.5 Q0.5 0.6 1.4 0.6 H5 L6.6 2.2 H12.6 Q13.5 2.2 13.5 3.1 V10 Q13.5 10.9 12.6 10.9 H1.4 Q0.5 10.9 0.5 10 Z" fill="#93a8b8"/></svg>
<span class="t" style="left:71.2px;top:692.1px;font-size:13px;color:#d6d6d6;">s-form</span>
<svg width="6" height="8" style="left:37px;top:715.6px" viewBox="0 0 6 8"><path d="M0.8 0.9 L4.9 4 L0.8 7.1 Z" fill="#c8c8c8"/></svg>
<svg width="15" height="12" style="left:50px;top:714.1px" viewBox="0 0 15 12"><path d="M0.5 1.5 Q0.5 0.6 1.4 0.6 H5 L6.6 2.2 H12.6 Q13.5 2.2 13.5 3.1 V10 Q13.5 10.9 12.6 10.9 H1.4 Q0.5 10.9 0.5 10 Z" fill="#93a8b8"/></svg>
<span class="t" style="left:71.2px;top:713.7px;font-size:13px;color:#d6d6d6;">s-form-show</span>
<svg width="6" height="8" style="left:37px;top:737.1px" viewBox="0 0 6 8"><path d="M0.8 0.9 L4.9 4 L0.8 7.1 Z" fill="#c8c8c8"/></svg>
<svg width="15" height="12" style="left:50px;top:735.6px" viewBox="0 0 15 12"><path d="M0.5 1.5 Q0.5 0.6 1.4 0.6 H5 L6.6 2.2 H12.6 Q13.5 2.2 13.5 3.1 V10 Q13.5 10.9 12.6 10.9 H1.4 Q0.5 10.9 0.5 10 Z" fill="#93a8b8"/></svg>
<span class="t" style="left:71.2px;top:735.2px;font-size:13px;color:#d6d6d6;">seckillItem</span>
<svg width="6" height="8" style="left:37px;top:758.6px" viewBox="0 0 6 8"><path d="M0.8 0.9 L4.9 4 L0.8 7.1 Z" fill="#c8c8c8"/></svg>
<svg width="15" height="12" style="left:50px;top:757.1px" viewBox="0 0 15 12"><path d="M0.5 1.5 Q0.5 0.6 1.4 0.6 H5 L6.6 2.2 H12.6 Q13.5 2.2 13.5 3.1 V10 Q13.5 10.9 12.6 10.9 H1.4 Q0.5 10.9 0.5 10 Z" fill="#93a8b8"/></svg>
<span class="t" style="left:71.2px;top:756.8px;font-size:13px;color:#d6d6d6;">skeleton</span>
<svg width="6" height="8" style="left:37px;top:780.2px" viewBox="0 0 6 8"><path d="M0.8 0.9 L4.9 4 L0.8 7.1 Z" fill="#c8c8c8"/></svg>
<svg width="15" height="12" style="left:50px;top:778.7px" viewBox="0 0 15 12"><path d="M0.5 1.5 Q0.5 0.6 1.4 0.6 H5 L6.6 2.2 H12.6 Q13.5 2.2 13.5 3.1 V10 Q13.5 10.9 12.6 10.9 H1.4 Q0.5 10.9 0.5 10 Z" fill="#93a8b8"/></svg>
<span class="t" style="left:71.2px;top:778.3px;font-size:13px;color:#d6d6d6;">sku</span>
<svg width="6" height="8" style="left:37px;top:801.7px" viewBox="0 0 6 8"><path d="M0.8 0.9 L4.9 4 L0.8 7.1 Z" fill="#c8c8c8"/></svg>
<svg width="15" height="12" style="left:50px;top:800.2px" viewBox="0 0 15 12"><path d="M0.5 1.5 Q0.5 0.6 1.4 0.6 H5 L6.6 2.2 H12.6 Q13.5 2.2 13.5 3.1 V10 Q13.5 10.9 12.6 10.9 H1.4 Q0.5 10.9 0.5 10 Z" fill="#93a8b8"/></svg>
<span class="t" style="left:71.2px;top:799.8px;font-size:13px;color:#d6d6d6;">spike</span>
<svg width="6" height="8" style="left:37px;top:823.3px" viewBox="0 0 6 8"><path d="M0.8 0.9 L4.9 4 L0.8 7.1 Z" fill="#c8c8c8"/></svg>
<svg width="15" height="12" style="left:50px;top:821.8px" viewBox="0 0 15 12"><path d="M0.5 1.5 Q0.5 0.6 1.4 0.6 H5 L6.6 2.2 H12.6 Q13.5 2.2 13.5 3.1 V10 Q13.5 10.9 12.6 10.9 H1.4 Q0.5 10.9 0.5 10 Z" fill="#93a8b8"/></svg>
<span class="t" style="left:71.2px;top:821.4px;font-size:13px;color:#d6d6d6;">tabbar</span>
<svg width="6" height="8" style="left:37px;top:844.8px" viewBox="0 0 6 8"><path d="M0.8 0.9 L4.9 4 L0.8 7.1 Z" fill="#c8c8c8"/></svg>
<svg width="15" height="12" style="left:50px;top:843.3px" viewBox="0 0 15 12"><path d="M0.5 1.5 Q0.5 0.6 1.4 0.6 H5 L6.6 2.2 H12.6 Q13.5 2.2 13.5 3.1 V10 Q13.5 10.9 12.6 10.9 H1.4 Q0.5 10.9 0.5 10 Z" fill="#93a8b8"/></svg>
<span class="t" style="left:71.2px;top:842.9px;font-size:13px;color:#d6d6d6;">tabs</span>
<svg width="6" height="8" style="left:37px;top:866.3px" viewBox="0 0 6 8"><path d="M0.8 0.9 L4.9 4 L0.8 7.1 Z" fill="#c8c8c8"/></svg>
<svg width="15" height="12" style="left:50px;top:864.8px" viewBox="0 0 15 12"><path d="M0.5 1.5 Q0.5 0.6 1.4 0.6 H5 L6.6 2.2 H12.6 Q13.5 2.2 13.5 3.1 V10 Q13.5 10.9 12.6 10.9 H1.4 Q0.5 10.9 0.5 10 Z" fill="#93a8b8"/></svg>
<span class="t" style="left:71.2px;top:864.4px;font-size:13px;color:#d6d6d6;">time-range</span>
<div class="abs" style="left:36px;top:322px;width:1px;height:86px;background:#4a4a4a"></div>
<div class="abs" style="left:0;top:883.3px;width:274px;height:23px;background:#383838"></div>
<div class="abs" style="left:0;top:882.6px;width:274px;height:1px;background:#2a2a2a"></div>
<svg width="6" height="8" style="left:8px;top:890px" viewBox="0 0 6 8"><path d="M0.8 0.6 L5 4 L0.8 7.4 Z" fill="#c8c8c8"/></svg>
<span class="t" style="left:19.5px;top:888.7px;font-size:11px;color:#dcdcdc;letter-spacing:-0.30px;font-weight:bold;">大纲</span>
</div>
<div id="editor">
<div class="abs" style="left:0;top:0;width:789px;height:28px;background:#383838"></div>
<div class="abs" style="left:118px;top:0;width:1px;height:28px;background:#303030"></div>
<div class="abs" style="left:12.5px;top:7.8px;width:12.5px;height:12.5px;background:#f5c530;border-radius:1px"></div>
<span class="t" style="left:16.8px;top:13.6px;font-size:6.5px;font-weight:bold;color:#4a3a08;letter-spacing:-0.3px">JS</span>
<span class="t" style="left:32.4px;top:8.3px;font-size:13px;color:#a4a4a4;letter-spacing:-0.22px;">siteinfo.js</span>
<div class="abs" style="left:118px;top:0;width:121px;height:28px;background:#2e2e2e"></div>
<svg width="11" height="14" style="left:131px;top:7px" viewBox="0 0 11 14"><path d="M1 0.5 H6.8 L10.5 4.2 V12.5 Q10.5 13.5 9.5 13.5 H1 Q0 13.5 0 12.5 V1.5 Q0 0.5 1 0.5 Z" fill="#7cc242"/><path d="M6.8 0.5 V4.2 H10.5" fill="#3e7f18"/><path d="M3.9 7.4 L2.3 9 L3.9 10.6 M6.6 7.4 L8.2 9 L6.6 10.6" fill="none" stroke="#1f4a08" stroke-width="1.1"/></svg>
<span class="t" style="left:150.3px;top:8.3px;font-size:13px;color:#ffffff;letter-spacing:-0.29px;">index.wxml</span>
<svg width="10" height="10" style="left:219px;top:9.5px" viewBox="0 0 10 10"><path d="M1 1 L9 9 M9 1 L1 9" stroke="#f0f0f0" stroke-width="1.5"/></svg>
<div class="abs" style="left:357px;top:0;width:1px;height:28px;background:#303030"></div>
<span class="t" style="left:249px;top:6px;font-size:13.5px;color:#ecc44e;letter-spacing:0.6px">{<span style="font-size:7px;position:relative;top:-0.5px;letter-spacing:0.3px">..</span>}</span>
<span class="t" style="left:272.0px;top:8.3px;font-size:13px;color:#9c9c9c;letter-spacing:-0.55px;font-style:italic;">index.json</span>
<div class="abs" style="left:476.5px;top:0;width:1px;height:28px;background:#303030"></div>
<svg width="14" height="13" style="left:369px;top:7.5px" viewBox="0 0 14 13"><path d="M1.6 0.5 H13.6 L12 10.2 L6.6 12.6 L1.4 10.2 L1.9 7 H4.2 L4 8.6 L6.7 9.8 L9.7 8.6 L10.1 6.3 H1 L1.4 3.9 H10.5 L10.8 2.6 H1.2 Z" fill="#3d8fe0"/></svg>
<span class="t" style="left:390.0px;top:8.3px;font-size:13px;color:#a4a4a4;letter-spacing:-0.58px;">index.wxss</span>
<svg width="16" height="11" style="left:8px;top:34.5px" viewBox="0 0 16 11"><path d="M0 1 H1.5 M3.5 1 H15 M0 3.8 H1.5 M3.5 3.8 H15 M0 6.6 H1.5 M3.5 6.6 H15 M0 9.4 H1.5 M3.5 9.4 H15" stroke="#8a8a8a" stroke-width="1.2"/></svg>
<svg width="11" height="14" style="left:39.5px;top:33px" viewBox="0 0 11 14"><path d="M1 0.8 H10 V13 L5.5 9.2 L1 13 Z" fill="none" stroke="#a8a8a8" stroke-width="1.4"/></svg>
<svg width="14" height="11" style="left:67.5px;top:34.5px" viewBox="0 0 14 11"><path d="M13.5 5.5 H1.5 M6 1 L1.3 5.5 L6 10" fill="none" stroke="#a0a0a0" stroke-width="1.4"/></svg>
<svg width="14" height="11" style="left:95.5px;top:34.5px" viewBox="0 0 14 11"><path d="M0.5 5.5 H12.5 M8 1 L12.7 5.5 L8 10" fill="none" stroke="#4a4a4a" stroke-width="1.4"/></svg>
<span class="t" style="left:124.3px;top:33.3px;font-size:13px;color:#7c7c7c;letter-spacing:-0.22px;">lionfish_comshop</span>
<svg width="7" height="11" style="left:227.0px;top:34.5px" viewBox="0 0 7 11"><path d="M1 0.8 L5.8 5.5 L1 10.2" fill="none" stroke="#8a8a8a" stroke-width="1.2"/></svg>
<span class="t" style="left:237.5px;top:33.3px;font-size:13px;color:#7c7c7c;letter-spacing:-0.06px;">components</span>
<svg width="7" height="11" style="left:312.5px;top:34.5px" viewBox="0 0 7 11"><path d="M1 0.8 L5.8 5.5 L1 10.2" fill="none" stroke="#8a8a8a" stroke-width="1.2"/></svg>
<span class="t" style="left:323.5px;top:33.3px;font-size:13px;color:#7c7c7c;letter-spacing:-0.14px;">new-auth</span>
<svg width="7" height="11" style="left:380.5px;top:34.5px" viewBox="0 0 7 11"><path d="M1 0.8 L5.8 5.5 L1 10.2" fill="none" stroke="#8a8a8a" stroke-width="1.2"/></svg>
<svg width="11" height="14" style="left:395.5px;top:33px" viewBox="0 0 11 14"><path d="M1 0.5 H6.8 L10.5 4.2 V12.5 Q10.5 13.5 9.5 13.5 H1 Q0 13.5 0 12.5 V1.5 Q0 0.5 1 0.5 Z" fill="#7cc242"/><path d="M6.8 0.5 V4.2 H10.5" fill="#3e7f18"/><path d="M3.9 7.4 L2.3 9 L3.9 10.6 M6.6 7.4 L8.2 9 L6.6 10.6" fill="none" stroke="#1f4a08" stroke-width="1.1"/></svg>
<span class="t" style="left:414.0px;top:33.3px;font-size:13px;color:#bcbcbc;letter-spacing:-0.26px;">index.wxml</span>
<svg width="7" height="11" style="left:481.0px;top:34.5px" viewBox="0 0 7 11"><path d="M1 0.8 L5.8 5.5 L1 10.2" fill="none" stroke="#8a8a8a" stroke-width="1.2"/></svg>
<svg width="14" height="14" style="left:493px;top:33px" viewBox="0 0 14 14"><path d="M7 2 L13.2 4.6 V9.6 L7 12.4 L0.8 9.6 V4.6 Z M0.8 4.6 L7 7.3 L13.2 4.6 M7 7.3 V12.4" fill="none" stroke="#5d9fd6" stroke-width="1.2" stroke-linejoin="round"/></svg>
<span class="t" style="left:514.0px;top:33.3px;font-size:13px;color:#b0b0b0;letter-spacing:0.06px;">i-modal</span>
<svg width="7" height="11" style="left:561.5px;top:34.5px" viewBox="0 0 7 11"><path d="M1 0.8 L5.8 5.5 L1 10.2" fill="none" stroke="#8a8a8a" stroke-width="1.2"/></svg>
<svg width="14" height="14" style="left:573.5px;top:33px" viewBox="0 0 14 14"><path d="M7 2 L13.2 4.6 V9.6 L7 12.4 L0.8 9.6 V4.6 Z M0.8 4.6 L7 7.3 L13.2 4.6 M7 7.3 V12.4" fill="none" stroke="#5d9fd6" stroke-width="1.2" stroke-linejoin="round"/></svg>
<span class="t" style="left:594.7px;top:33.3px;font-size:13px;color:#b0b0b0;letter-spacing:-0.02px;">view.auth-content</span>
<svg width="7" height="11" style="left:700.0999999999999px;top:34.5px" viewBox="0 0 7 11"><path d="M1 0.8 L5.8 5.5 L1 10.2" fill="none" stroke="#8a8a8a" stroke-width="1.2"/></svg>
<svg width="14" height="14" style="left:712px;top:33px" viewBox="0 0 14 14"><path d="M7 2 L13.2 4.6 V9.6 L7 12.4 L0.8 9.6 V4.6 Z M0.8 4.6 L7 7.3 L13.2 4.6 M7 7.3 V12.4" fill="none" stroke="#5d9fd6" stroke-width="1.2" stroke-linejoin="round"/></svg>
<span class="t" style="left:732.7px;top:33.3px;font-size:13px;color:#b0b0b0;letter-spacing:-0.01px;">view.btn</span>
<svg width="7" height="11" style="left:782.5px;top:34.5px" viewBox="0 0 7 11"><path d="M1 0.8 L5.8 5.5 L1 10.2" fill="none" stroke="#8a8a8a" stroke-width="1.2"/></svg>
<div class="abs" style="left:72.5px;top:214.8px;width:717px;height:23.4px;background:#4a4a4a"></div>
<div class="abs" style="left:72.29999999999995px;top:72.3px;width:1px;height:541.9px;background:#404040"></div>
<div class="abs" style="left:103.29999999999995px;top:119.4px;width:1px;height:447.6px;background:#404040"></div>
<div class="abs" style="left:133.39999999999998px;top:166.5px;width:1px;height:23.6px;background:#404040"></div>
<div class="abs" style="left:125.29999999999995px;top:215.4px;width:7px;height:20.5px;border:1px solid #66786a;box-sizing:content-box"></div>
<div class="abs" style="left:245.79999999999995px;top:215.4px;width:7px;height:20.5px;border:1px solid #66786a;box-sizing:content-box"></div>
<span class="ln" style="left:16.200000000000045px;top:54.3px;color:#474747">1</span>
<svg width="11" height="7" style="left:54.700000000000045px;top:54.3px" viewBox="0 0 11 7"><path d="M0.8 0.8 L5.5 5.6 L10.2 0.8" fill="none" stroke="#c4c4c4" stroke-width="1.3"/></svg>
<span class="code" style="left:72.20000000000005px;top:54.3px"><span class="tg">&lt;i-modal</span> bind:cancel="<span class="st">close</span>" scrollUp="<span class="y">{</span><span class="m">{</span><span class="st">false</span><span class="m">}</span><span class="y">}</span>" visible="<span class="y">{</span><span class="m">{</span><span class="id">needAuth</span><span class="m">}</span><span class="y">}</span>"<span class="tg">&gt;</span></span>
<span class="ln" style="left:16.200000000000045px;top:77.9px;color:#474747">2</span>
<svg width="11" height="7" style="left:54.700000000000045px;top:77.9px" viewBox="0 0 11 7"><path d="M0.8 0.8 L5.5 5.6 L10.2 0.8" fill="none" stroke="#c4c4c4" stroke-width="1.3"/></svg>
<span class="code" style="left:72.20000000000005px;top:77.9px">  <span class="tg">&lt;view</span> class="<span class="st">auth-content</span>"<span class="tg">&gt;</span></span>
<span class="ln" style="left:16.200000000000045px;top:101.4px;color:#474747">3</span>
<svg width="11" height="7" style="left:54.700000000000045px;top:101.4px" viewBox="0 0 11 7"><path d="M0.8 0.8 L5.5 5.6 L10.2 0.8" fill="none" stroke="#c4c4c4" stroke-width="1.3"/></svg>
<span class="code" style="left:72.20000000000005px;top:101.4px">    <span class="tg">&lt;view</span> class="<span class="st">btn</span>" wx:if="<span class="y">{</span><span class="m">{</span><span class="id">canIUse</span><span class="m">}</span><span class="y">}</span>"<span class="tg">&gt;</span></span>
<span class="ln" style="left:16.200000000000045px;top:125.0px;color:#474747">4</span>
<svg width="11" height="7" style="left:54.700000000000045px;top:125.0px" viewBox="0 0 11 7"><path d="M0.8 0.8 L5.5 5.6 L10.2 0.8" fill="none" stroke="#c4c4c4" stroke-width="1.3"/></svg>
<span class="code" style="left:72.20000000000005px;top:125.0px">      <span class="tg">&lt;view</span> class="<span class="st">content</span>"<span class="tg">&gt;</span></span>
<span class="ln" style="left:16.200000000000045px;top:148.5px;color:#474747">5</span>
<svg width="11" height="7" style="left:54.700000000000045px;top:148.5px" viewBox="0 0 11 7"><path d="M0.8 0.8 L5.5 5.6 L10.2 0.8" fill="none" stroke="#c4c4c4" stroke-width="1.3"/></svg>
<span class="code" style="left:72.20000000000005px;top:148.5px">        <span class="tg">&lt;button</span> class="<span class="st">avatar-wrapper</span>" open-type="<span class="st">chooseAvatar</span>" bind:chooseavatar="<span class="st">onChooseAvatar</span>" <span class="tg">&gt;</span></span>
<span class="ln" style="left:16.200000000000045px;top:172.1px;color:#474747">6</span>
<span class="code" style="left:72.20000000000005px;top:172.1px">         <span class="tg">&lt;image</span> class="<span class="st">avatar</span>" src="<span class="ul"><span class="y">{</span><span class="m">{</span><span class="id">avatarUrl</span><span class="m">}</span><span class="y">}</span></span>"<span class="tg">&gt;</span><span class="tg">&lt;/image</span><span class="tg">&gt;</span></span>
<span class="ln" style="left:16.200000000000045px;top:195.7px;color:#474747">7</span>
<span class="code" style="left:72.20000000000005px;top:195.7px">       <span class="tg">&lt;/button</span><span class="tg">&gt;</span></span>
<span class="ln" style="left:16.200000000000045px;top:219.2px;color:#c8c8c8">8</span>
<svg width="11" height="7" style="left:54.700000000000045px;top:219.2px" viewBox="0 0 11 7"><path d="M0.8 0.8 L5.5 5.6 L10.2 0.8" fill="none" stroke="#c4c4c4" stroke-width="1.3"/></svg>
<span class="code" style="left:72.20000000000005px;top:219.2px">       <span class="tg">&lt;view</span> class="<span class="st">nm</span>"<span class="tg">&gt;</span></span>
<span class="ln" style="left:16.200000000000045px;top:242.8px;color:#474747">9</span>
<span class="code" style="left:72.20000000000005px;top:242.8px">       <span class="tg">&lt;text</span> class="<span class="st">nmtext</span>"<span class="tg">&gt;</span><span class="cj">昵称</span><span class="tg">&lt;/text</span><span class="tg">&gt;</span></span>
<span class="ln" style="left:16.200000000000045px;top:266.3px;color:#474747">10</span>
<span class="code" style="left:72.20000000000005px;top:266.3px">        <span class="tg">&lt;input</span> type="<span class="st">nickname</span>" model:value="<span class="y">{</span><span class="m">{</span><span class="id">nickname</span><span class="m">}</span><span class="y">}</span>"  class="<span class="st">weui-input</span>"<span class="tg">/&gt;</span></span>
<span class="ln" style="left:16.200000000000045px;top:289.9px;color:#474747">11</span>
<span class="code" style="left:72.20000000000005px;top:289.9px">       <span class="tg">&lt;/view</span><span class="tg">&gt;</span></span>
<span class="ln" style="left:16.200000000000045px;top:313.5px;color:#474747">12</span>
<span class="code" style="left:72.20000000000005px;top:313.5px">      <span class="tg">&lt;/view</span><span class="tg">&gt;</span></span>
<span class="ln" style="left:16.200000000000045px;top:337.0px;color:#474747">13</span>
<svg width="11" height="7" style="left:54.700000000000045px;top:337.0px" viewBox="0 0 11 7"><path d="M0.8 0.8 L5.5 5.6 L10.2 0.8" fill="none" stroke="#c4c4c4" stroke-width="1.3"/></svg>
<span class="code" style="left:72.20000000000005px;top:337.0px">      <span class="tg">&lt;view</span> class="<span class="st">close-img</span>" bindtap="<span class="st">close</span>" wx:if="<span class="y">{</span><span class="m">{</span><span class="id">newauth_cancel_image</span><span class="m">}</span><span class="y">}</span>"<span class="tg">&gt;</span></span>
<span class="ln" style="left:16.200000000000045px;top:360.6px;color:#474747">14</span>
<span class="code" style="left:72.20000000000005px;top:360.6px">        <span class="tg">&lt;image</span> class="<span class="st">img</span>" mode="<span class="st">widthFix</span>" src="<span class="ul"><span class="y">{</span><span class="m">{</span><span class="id">newauth_cancel_image</span><span class="m">}</span><span class="y">}</span></span>"<span class="tg">&gt;</span><span class="tg">&lt;/image</span><span class="tg">&gt;</span></span>
<span class="ln" style="left:16.200000000000045px;top:384.1px;color:#474747">15</span>
<span class="code" style="left:72.20000000000005px;top:384.1px">      <span class="tg">&lt;/view</span><span class="tg">&gt;</span></span>
<span class="ln" style="left:16.200000000000045px;top:407.7px;color:#474747">16</span>
<svg width="11" height="7" style="left:54.700000000000045px;top:407.7px" viewBox="0 0 11 7"><path d="M0.8 0.8 L5.5 5.6 L10.2 0.8" fill="none" stroke="#c4c4c4" stroke-width="1.3"/></svg>
<span class="code" style="left:72.20000000000005px;top:407.7px">      <span class="tg">&lt;button</span> catchtap="<span class="st">getProfile</span>" class="<span class="st">confirm-img</span>" wx:if="<span class="y">{</span><span class="m">{</span><span class="id">newauth_confirm_image</span><span class="m">}</span><span class="y">}</span>"<span class="tg">&gt;</span></span>
<span class="ln" style="left:16.200000000000045px;top:431.3px;color:#474747">17</span>
<span class="code" style="left:72.20000000000005px;top:431.3px">        <span class="tg">&lt;image</span> class="<span class="st">img</span>" mode="<span class="st">widthFix</span>" src="<span class="y">{</span><span class="m">{</span><span class="id">newauth_confirm_image</span><span class="m">}</span><span class="y">}</span>"<span class="tg">&gt;</span><span class="tg">&lt;/image</span><span class="tg">&gt;</span></span>
<span class="ln" style="left:16.200000000000045px;top:454.8px;color:#474747">18</span>
<span class="code" style="left:72.20000000000005px;top:454.8px">      <span class="tg">&lt;/button</span><span class="tg">&gt;</span></span>
<span class="ln" style="left:16.200000000000045px;top:478.4px;color:#474747">19</span>
<svg width="11" height="7" style="left:54.700000000000045px;top:478.4px" viewBox="0 0 11 7"><path d="M0.8 0.8 L5.5 5.6 L10.2 0.8" fill="none" stroke="#c4c4c4" stroke-width="1.3"/></svg>
<span class="code" style="left:72.20000000000005px;top:478.4px">      <span class="tg">&lt;button</span> catchtap="<span class="st">getProfile</span>" class="<span class="st">confirm</span>" loading="<span class="y">{</span><span class="m">{</span><span class="id">btnLoading</span><span class="m">}</span><span class="y">}</span>" style="<span class="st">background:</span><span class="y">{</span><span class="m">{</span><span class="id">skin.color</span><span class="m">}</span><span class="y">}</span><span class="st">;color:#fff</span>"<span class="tg">&gt;</span></span>
<span class="ln" style="left:16.200000000000045px;top:501.9px;color:#474747">20</span>
<span class="code" style="left:72.20000000000005px;top:501.9px">        <span class="cj">立即登录</span></span>
<span class="ln" style="left:16.200000000000045px;top:525.5px;color:#474747">21</span>
<span class="code" style="left:72.20000000000005px;top:525.5px">      <span class="tg">&lt;/button</span><span class="tg">&gt;</span></span>
<span class="ln" style="left:16.200000000000045px;top:549.1px;color:#474747">22</span>
<span class="code" style="left:72.20000000000005px;top:549.1px">      <span class="tg">&lt;view</span> class="<span class="st">close-btn</span>" bindtap="<span class="st">close</span>" style="<span class="st">border-color:</span><span class="y">{</span><span class="m">{</span><span class="id">skin.color</span><span class="m">}</span><span class="y">}</span><span class="st">;color:</span><span class="y">{</span><span class="m">{</span><span class="id">skin.color</span><span class="m">}</span><span class="y">}</span>"<span class="tg">&gt;</span></span>
<span class="ln" style="left:16.200000000000045px;top:572.6px;color:#474747">23</span>
<span class="code" style="left:72.20000000000005px;top:572.6px">    <span class="tg">&lt;/view</span><span class="tg">&gt;</span></span>
<span class="ln" style="left:16.200000000000045px;top:596.2px;color:#474747">24</span>
<span class="code" style="left:72.20000000000005px;top:596.2px">    <span class="tg">&lt;view</span> class="<span class="st">updateWx</span>" wx:else<span class="tg">&gt;</span><span class="cj">请升级微信版本</span><span class="tg">&lt;/view</span><span class="tg">&gt;</span></span>
</div>
<div id="debug">
<div class="abs" style="left:0;top:0;width:789px;height:29.299999999999955px;background:#303030"></div>
<div class="abs" style="left:0;top:0;width:789px;height:1px;background:#454545"></div>
<span class="t" style="left:20.0px;top:10.5px;font-size:11px;color:#f0f0f0;letter-spacing:-0.15px;font-weight:bold;">调试器</span>
<div class="abs" style="left:20px;top:27.600000000000023px;width:33px;height:1.5px;background:#d0d0d0"></div>
<div class="abs" style="left:61.299999999999955px;top:8px;width:31.7px;height:15.7px;border-radius:8px;background:#484848"></div>
<span class="t" style="left:66.3px;top:10.5px;font-size:11px;color:#e0e0e0;letter-spacing:-0.62px;">2, 38</span>
<span class="t" style="left:112.6px;top:10.5px;font-size:11px;color:#979797;letter-spacing:0.10px;">问题</span>
<span class="t" style="left:153.7px;top:10.5px;font-size:11px;color:#979797;letter-spacing:-0.10px;">输出</span>
<span class="t" style="left:194.6px;top:10.5px;font-size:11px;color:#979797;letter-spacing:0.40px;">终端</span>
<span class="t" style="left:236.0px;top:10.5px;font-size:11px;color:#979797;letter-spacing:-0.07px;">代码质量</span>
<div class="abs" style="left:0;top:29.299999999999955px;width:789px;height:25.7px;background:#292929"></div>
<div class="abs" style="left:0;top:54.799999999999955px;width:789px;height:1px;background:#3c3c3c"></div>
<svg width="15" height="14" style="left:10px;top:35.5px" viewBox="0 0 15 14"><path d="M5 11.5 H1 V1 H12 V5" fill="none" stroke="#8a8a8a" stroke-width="1.2"/><path d="M6.5 5.5 L13.5 8.6 L10.6 9.6 L12.6 13 L11 13.8 L9.2 10.4 L7 12.6 Z" fill="#9a9a9a"/></svg>
<div class="abs" style="left:30px;top:33px;width:1px;height:17px;background:#3a3a3a"></div>
<div class="abs" style="left:41px;top:29.5px;width:53px;height:25.2px;background:#000"></div>
<span class="t" style="left:52.7px;top:36.7px;font-size:12px;color:#fff;letter-spacing:-0.23px;">Wxml</span>
<span class="t" style="left:105.3px;top:36.7px;font-size:12px;color:#d6d6d6;letter-spacing:-0.36px;">Console</span>
<span class="t" style="left:169.9px;top:36.7px;font-size:12px;color:#d6d6d6;letter-spacing:-0.54px;">Sources</span>
<span class="t" style="left:233.6px;top:36.7px;font-size:12px;color:#d6d6d6;letter-spacing:0.13px;">Network</span>
<span class="t" style="left:301.3px;top:36.7px;font-size:12px;color:#d6d6d6;letter-spacing:-0.28px;">Performance</span>
<span class="t" style="left:391.0px;top:36.7px;font-size:12px;color:#d6d6d6;letter-spacing:-0.07px;">Memory</span>
<span class="t" style="left:457.0px;top:36.7px;font-size:12px;color:#d6d6d6;letter-spacing:-0.15px;">AppData</span>
<span class="t" style="left:525.7px;top:36.7px;font-size:12px;color:#d6d6d6;letter-spacing:-0.19px;">Storage</span>
<span class="t" style="left:589.5px;top:36.7px;font-size:12px;color:#d6d6d6;letter-spacing:-0.27px;">Security</span>
<span class="t" style="left:663.0px;top:36.7px;font-size:12px;color:#d6d6d6;letter-spacing:-0.61px;">Sensor</span>
<span class="t" style="left:721.0px;top:36.7px;font-size:12px;color:#d6d6d6;letter-spacing:-0.02px;">Mock</span>
<span class="t" style="left:772.5px;top:36.7px;font-size:12px;color:#d6d6d6;letter-spacing:0.03px;">Audits</span>
<span class="wx" style="left:15px;top:61.5px"><span class="wt">&lt;page&gt;</span></span>
<svg width="5" height="7" style="left:17.2px;top:78.9px" viewBox="0 0 5 7"><path d="M0.3 0.3 L4.6 3.5 L0.3 6.7 Z" fill="#b0b0b0"/></svg>
<span class="wx" style="left:26px;top:77.9px"><span class="wt">&lt;view</span> <span class="wa">class</span><span class="wd">="</span><span class="ws">pb100</span><span class="wd">"</span><span class="wt">&gt;</span><span class="we">…</span><span class="wt">&lt;/view&gt;</span></span>
<svg width="5" height="7" style="left:17.2px;top:95.3px" viewBox="0 0 5 7"><path d="M0.3 0.3 L4.6 3.5 L0.3 6.7 Z" fill="#b0b0b0"/></svg>
<span class="wx" style="left:26px;top:94.3px"><span class="wt">&lt;i-tabbar</span> <span class="wa">is</span><span class="wd">="</span><span class="ws">lionfish_comshop/components/tabbar/index</span><span class="wd">"</span> <span class="wa">bind:authmodal</span><span class="wd">="</span><span class="ws">authModal</span><span class="wd">"</span><span class="wt">&gt;</span><span class="we">…</span><span class="wt">&lt;/i-tabbar&gt;</span></span>
<svg width="5" height="7" style="left:17.2px;top:111.8px" viewBox="0 0 5 7"><path d="M0.3 0.3 L4.6 3.5 L0.3 6.7 Z" fill="#b0b0b0"/></svg>
<span class="wx" style="left:26px;top:110.8px"><span class="wt">&lt;i-get-phone</span> <span class="wa">is</span><span class="wd">="</span><span class="ws">lionfish_comshop/components/get-phone/index</span><span class="wd">"</span> <span class="wa">bind:cancel</span><span class="wd">="</span><span class="ws">close</span><span class="wd">"</span> <span class="wa">bind:confirm</span><span class="wd">="</span><span class="ws">getReceiveMobile</span><span class="wd">"</span></span>
<span class="wx" style="left:15px;top:127.2px"><span class="wa">bind:needauth</span><span class="wd">="</span><span class="ws">authModal</span><span class="wd">"</span><span class="wt">&gt;</span><span class="we">…</span><span class="wt">&lt;/i-get-phone&gt;</span></span>
<svg width="5" height="7" style="left:17.2px;top:144.6px" viewBox="0 0 5 7"><path d="M0.3 0.3 L4.6 3.5 L0.3 6.7 Z" fill="#b0b0b0"/></svg>
<span class="wx" style="left:26px;top:143.6px"><span class="wt">&lt;i-fetch-coder</span> <span class="wa">is</span><span class="wd">="</span><span class="ws">lionfish_comshop/components/fetch-coder/index</span><span class="wd">"</span> <span class="wa">bind:cancel</span><span class="wd">="</span><span class="ws">toggleFetchCoder</span><span class="wd">"</span><span class="wt">&gt;</span><span class="we">…</span><span class="wt">&lt;/i-fetch-coder&gt;</span></span>
<svg width="5" height="7" style="left:17.2px;top:161.0px" viewBox="0 0 5 7"><path d="M0.3 0.3 L4.6 3.5 L0.3 6.7 Z" fill="#b0b0b0"/></svg>
<span class="wx" style="left:26px;top:160.0px"><span class="wt">&lt;i-new-auth</span> <span class="wa">is</span><span class="wd">="</span><span class="ws">lionfish_comshop/components/new-auth/index</span><span class="wd">"</span> <span class="wa">bind:authsuccess</span><span class="wd">="</span><span class="ws">authSuccess</span><span class="wd">"</span> <span class="wa">bind:cancel</span><span class="wd">="</span><span class="ws">authModal</span><span class="wd">"</span><span class="wt">&gt;</span><span class="we">…</span></span>
<span class="wx" style="left:15px;top:176.4px"><span class="wt">&lt;/i-new-auth&gt;</span></span>
<svg width="5" height="7" style="left:17.2px;top:193.9px" viewBox="0 0 5 7"><path d="M0.3 0.3 L4.6 3.5 L0.3 6.7 Z" fill="#b0b0b0"/></svg>
<span class="wx" style="left:26px;top:192.9px"><span class="wt">&lt;ad-alert</span> <span class="wa">is</span><span class="wd">="</span><span class="ws">lionfish_comshop/components/ad-alert/index</span><span class="wd">"</span><span class="wt">&gt;</span><span class="we">…</span><span class="wt">&lt;/ad-alert&gt;</span></span>
<span class="wx" style="left:15px;top:209.3px"><span class="wt">&lt;/page&gt;</span></span>
<div class="abs" style="left:784.5px;top:55.5px;width:4.5px;height:210px;background:#333"></div>
<div class="abs" style="left:784.5px;top:55.5px;width:4.5px;height:25px;background:#000"></div>
<div class="abs" style="left:0;top:266px;width:789px;height:1px;background:#3c3c3c"></div>
<div class="abs" style="left:0;top:288.5px;width:789px;height:6px;background:#3b3b3b"></div>
</div>
</div>
</body>
</html>
